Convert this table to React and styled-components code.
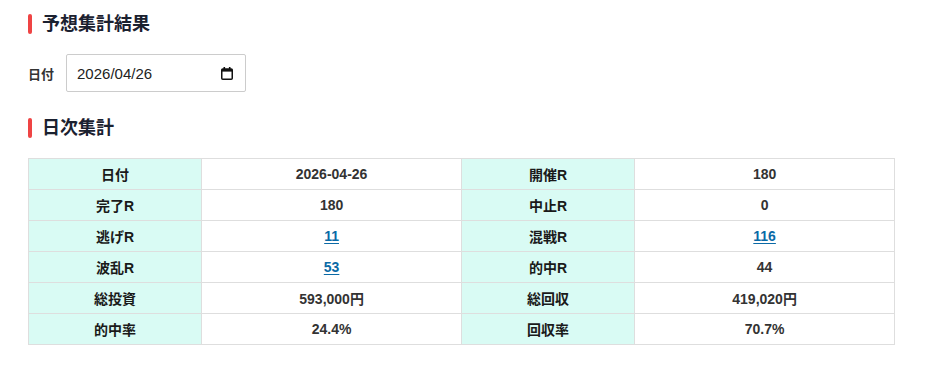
import React from "react";
import styled, { createGlobalStyle } from "styled-components";

const Global = createGlobalStyle`
  html, body { margin: 0; padding: 0; background: #fff; }
  body { font-family: "Liberation Sans", "Noto Sans CJK JP", sans-serif; color: #333; }
`;

const Page = styled.div`
  padding: 14px 54px 0 28px;
  display: flex;
  flex-direction: column;
`;

const Title = styled.h2`
  margin: 0 0 ${(p) => p.$mb}px;
  display: flex;
  align-items: center;
  gap: 10px;
  font-size: 18px;
  line-height: 20px;
  font-weight: 700;
  color: #1b2130;
  &::before {
    content: "";
    width: 4px;
    height: 20px;
    border-radius: 2px;
    background: #ef4444;
  }
`;

const DateRow = styled.div`
  display: flex;
  align-items: center;
  gap: 12px;
  margin-bottom: 26px;
`;

const Label = styled.label`
  font-size: 13px;
  font-weight: 700;
  color: #333;
`;

const DateField = styled.div`
  box-sizing: border-box;
  width: 180px;
  height: 38px;
  padding: 0 12px 0 10px;
  border: 1px solid #ccc;
  border-radius: 2px;
  display: flex;
  align-items: center;
  background: #fff;
`;

const DateText = styled.input`
  flex: 1;
  min-width: 0;
  border: 0;
  outline: none;
  padding: 0;
  font-family: "Liberation Sans", "Noto Sans CJK JP", sans-serif;
  font-size: 15px;
  color: #222;
  background: transparent;
`;

const CalIcon = () => (
  <svg width="12" height="13" viewBox="0 0 12 13" aria-hidden="true">
    <rect x="2.5" y="0" width="1.6" height="2.5" fill="#111" />
    <rect x="7.9" y="0" width="1.6" height="2.5" fill="#111" />
    <rect x="0.75" y="2" width="10.5" height="10.25" rx="1" fill="none" stroke="#111" strokeWidth="1.5" />
    <rect x="0.75" y="2" width="10.5" height="2.6" fill="#111" />
  </svg>
);

const Table = styled.table`
  width: 867px;
  border-collapse: collapse;
  table-layout: fixed;
  font-size: 14px;
  font-weight: 700;
  color: #333;
`;

const Cell = styled.td`
  height: 30px;
  padding: 0;
  border: 1px solid #dedede;
  text-align: center;
  background: ${(p) => (p.$head ? "#d9fbf4" : "#fff")};
  color: ${(p) => (p.$head ? "#1a1a1a" : "#333")};
`;

const Link = styled.a`
  color: #0b6aa6;
  text-decoration: underline;
  text-underline-offset: 2px;
`;

const rows = [
  ["日付", "2026-04-26", "開催R", "180"],
  ["完了R", "180", "中止R", "0"],
  ["逃げR", { link: "11" }, "混戦R", { link: "116" }],
  ["波乱R", { link: "53" }, "的中R", "44"],
  ["総投資", "593,000円", "総回収", "419,020円"],
  ["的中率", "24.4%", "回収率", "70.7%"],
];

const val = (v) => (typeof v === "object" ? <Link href="#">{v.link}</Link> : v);

export default function App() {
  return (
    <>
      <Global />
      <Page>
        <Title $mb={20}>予想集計結果</Title>
        <DateRow>
          <Label>日付</Label>
          <DateField>
            <DateText type="text" defaultValue="2026/04/26" />
            <CalIcon />
          </DateField>
        </DateRow>
        <Title $mb={20}>日次集計</Title>
        <Table>
          <colgroup>
            <col style={{ width: "20%" }} />
            <col style={{ width: "30%" }} />
            <col style={{ width: "20%" }} />
            <col style={{ width: "30%" }} />
          </colgroup>
          <tbody>
            {rows.map((r, i) => (
              <tr key={i}>
                <Cell $head>{r[0]}</Cell>
                <Cell>{val(r[1])}</Cell>
                <Cell $head>{r[2]}</Cell>
                <Cell>{val(r[3])}</Cell>
              </tr>
            ))}
          </tbody>
        </Table>
      </Page>
    </>
  );
}
